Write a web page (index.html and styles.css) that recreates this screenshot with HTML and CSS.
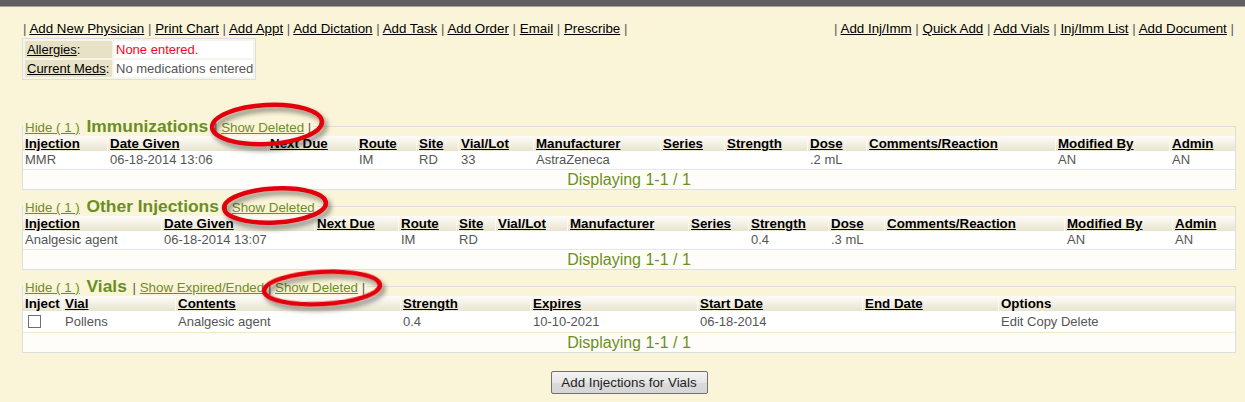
FILE: index.html
```html
<!DOCTYPE html>
<html>
<head>
<meta charset="utf-8">
<title>Chart</title>
<link rel="stylesheet" href="styles.css">
</head>
<body>
<div class="topbar"></div>
<div class="page">
  <div class="toolbar">
    <div class="links"><span class="sep">|</span> <a href="#">Add New Physician</a> <span class="sep">|</span> <a href="#">Print Chart</a> <span class="sep">|</span> <a href="#">Add Appt</a> <span class="sep">|</span> <a href="#">Add Dictation</a> <span class="sep">|</span> <a href="#">Add Task</a> <span class="sep">|</span> <a href="#">Add Order</a> <span class="sep">|</span> <a href="#">Email</a> <span class="sep">|</span> <a href="#">Prescribe</a> <span class="sep">|</span></div>
    <div class="links"><span class="sep">|</span> <a href="#">Add Inj/Imm</a> <span class="sep">|</span> <a href="#">Quick Add</a> <span class="sep">|</span> <a href="#">Add Vials</a> <span class="sep">|</span> <a href="#">Inj/Imm List</a> <span class="sep">|</span> <a href="#">Add Document</a> <span class="sep">|</span></div>
  </div>

  <table class="summary">
    <tr><td class="label"><a href="#">Allergies</a>:</td><td class="value none">None entered.</td></tr>
    <tr><td class="label"><a href="#">Current Meds</a>:</td><td class="value">No medications entered</td></tr>
  </table>

  <section class="panel">
    <div class="panel-head"><span class="head-inner"><a class="green" href="#">Hide ( 1 )</a> <span class="title">Immunizations</span> <span class="sep">|</span> <a class="green" href="#">Show Deleted</a> <span class="sep">|</span></span></div>
    <table class="grid imm">
      <colgroup><col><col><col><col><col><col><col><col><col><col><col><col><col></colgroup>
      <tr><th><a href="#">Injection</a></th><th><a href="#">Date Given</a></th><th><a href="#">Next Due</a></th><th><a href="#">Route</a></th><th><a href="#">Site</a></th><th><a href="#">Vial/Lot</a></th><th><a href="#">Manufacturer</a></th><th><a href="#">Series</a></th><th><a href="#">Strength</a></th><th><a href="#">Dose</a></th><th><a href="#">Comments/Reaction</a></th><th><a href="#">Modified By</a></th><th><a href="#">Admin</a></th></tr>
      <tr class="row"><td>MMR</td><td>06-18-2014 13:06</td><td></td><td>IM</td><td>RD</td><td>33</td><td>AstraZeneca</td><td></td><td></td><td>.2 mL</td><td></td><td>AN</td><td>AN</td></tr>
      <tr><td class="pager" colspan="13">Displaying 1-1 / 1</td></tr>
    </table>
  </section>

  <section class="panel">
    <div class="panel-head"><span class="head-inner"><a class="green" href="#">Hide ( 1 )</a> <span class="title">Other Injections</span> <span class="sep">|</span> <a class="green" href="#">Show Deleted</a></span></div>
    <table class="grid oth">
      <colgroup><col><col><col><col><col><col><col><col><col><col><col><col><col></colgroup>
      <tr><th><a href="#">Injection</a></th><th><a href="#">Date Given</a></th><th><a href="#">Next Due</a></th><th><a href="#">Route</a></th><th><a href="#">Site</a></th><th><a href="#">Vial/Lot</a></th><th><a href="#">Manufacturer</a></th><th><a href="#">Series</a></th><th><a href="#">Strength</a></th><th><a href="#">Dose</a></th><th><a href="#">Comments/Reaction</a></th><th><a href="#">Modified By</a></th><th><a href="#">Admin</a></th></tr>
      <tr class="row"><td>Analgesic agent</td><td>06-18-2014 13:07</td><td></td><td>IM</td><td>RD</td><td></td><td></td><td></td><td>0.4</td><td>.3 mL</td><td></td><td>AN</td><td>AN</td></tr>
      <tr><td class="pager" colspan="13">Displaying 1-1 / 1</td></tr>
    </table>
  </section>

  <section class="panel">
    <div class="panel-head"><span class="head-inner"><a class="green" href="#">Hide ( 1 )</a> <span class="title">Vials</span> <span class="sep">|</span> <a class="green" href="#">Show Expired/Ended</a> <span class="sep">|</span> <a class="green" href="#">Show Deleted</a> <span class="sep">|</span></span></div>
    <table class="grid vials">
      <colgroup><col><col><col><col><col><col><col><col></colgroup>
      <tr><th>Inject</th><th><a href="#">Vial</a></th><th><a href="#">Contents</a></th><th><a href="#">Strength</a></th><th><a href="#">Expires</a></th><th><a href="#">Start Date</a></th><th><a href="#">End Date</a></th><th>Options</th></tr>
      <tr class="row tall"><td><input class="check" type="checkbox"></td><td>Pollens</td><td>Analgesic agent</td><td>0.4</td><td>10-10-2021</td><td>06-18-2014</td><td></td><td>Edit Copy Delete</td></tr>
      <tr><td class="pager" colspan="8">Displaying 1-1 / 1</td></tr>
    </table>
  </section>

  <div class="actions"><button class="btn" type="button">Add Injections for Vials</button></div>
</div>

<svg class="marks" width="1245" height="402" viewBox="0 0 1245 402" aria-hidden="true">
  <defs>
    <filter id="sh" x="-20%" y="-50%" width="150%" height="220%">
      <feDropShadow dx="3" dy="4" stdDeviation="2.5" flood-color="#000" flood-opacity="0.45"/>
    </filter>
  </defs>
  <g fill="none" stroke="#e2000e" stroke-width="4.5" filter="url(#sh)">
    <ellipse cx="267" cy="124.5" rx="55" ry="19.5" transform="rotate(-3 267 124.5)"/>
    <ellipse cx="275" cy="205.5" rx="51" ry="17" transform="rotate(-3 275 205.5)"/>
    <ellipse cx="322" cy="288" rx="58" ry="16" transform="rotate(-3 322 288)"/>
  </g>
</svg>
</body>
</html>
```

FILE: styles.css
```css
* { box-sizing: border-box; }
html, body { margin: 0; padding: 0; }
body {
  background: #faf5d8;
  font-family: "Liberation Sans", Arial, sans-serif;
  font-size: 13px;
  color: #000;
  width: 1245px;
  height: 402px;
  overflow: hidden;
  position: relative;
}
a { color: #000; text-decoration: underline; }
.topbar { height: 7px; background: #5f5f5f; border-bottom: 1px solid #a3a3a3; }
.page { padding: 14px 9px 0 22px; }

.toolbar {
  display: flex;
  justify-content: space-between;
  height: 16px;
  line-height: 16px;
  font-size: 13.33px;
  padding: 0 2px 0 1px;
  white-space: nowrap;
}
.sep { color: #5a5a5a; }

.summary {
  margin-top: 1px;
  border: 1px solid #dcdfe2;
  border-spacing: 2px;
  background: #f7f4e9;
}
.summary td { height: 17px; line-height: 17px; padding: 0 0 0 2px; white-space: nowrap; }
.summary .label { width: 87px; background: #e7e1c5; }
.summary .value { width: 139px; background: #fff; color: #555; }
.summary .none { color: #ff0025; }

.panel { border: 1px solid #dcdfe2; margin-top: 46px; }
.panel + .panel { margin-top: 16px; }
.panel-head {
  margin-top: -10px;
  height: 19px;
  line-height: 19px;
  font-size: 17.5px;
  white-space: nowrap;
}
.head-inner { background: #faf5d8; padding: 0 2px; font-size: 13.33px; }
.head-inner .title { font-size: 17.4px; font-weight: bold; color: #6b8e23; margin: 0 2px 0 3px; }
a.green { color: #6f8c2a; }

.grid { width: 1212px; table-layout: fixed; border-collapse: separate; border-spacing: 0; }
.grid th {
  height: 15px;
  line-height: 15px;
  padding: 0 0 0 2px;
  text-align: left;
  font-size: 13.33px;
  font-weight: bold;
  white-space: nowrap;
  overflow: hidden;
  background: linear-gradient(#fdfcf8, #e9e4cf);
  border-left: 1px solid #fbfaf4;
}
.grid th:first-child { border-left: 0; }
.grid td { padding: 0 0 0 3px; white-space: nowrap; overflow: hidden; color: #555; }
.grid td:first-child { padding-left: 2px; }
.grid .row td { height: 18px; line-height: 18px; background: #fff; }
.grid .tall td { height: 21px; line-height: 21px; }
.grid td.pager {
  height: 20px;
  line-height: 19px;
  padding: 0;
  text-align: center;
  font-size: 16px;
  color: #6b8e23;
  background: #fffdf9;
  border-top: 1px solid #f0eacb;
}
.check {
  appearance: none;
  -webkit-appearance: none;
  display: inline-block;
  width: 13px;
  height: 13px;
  margin: 0 0 0 3px;
  border: 1px solid #707070;
  background: #fff;
  vertical-align: -2px;
}

.imm col:nth-child(1) { width: 84px; }
.imm col:nth-child(2) { width: 160px; }
.imm col:nth-child(3) { width: 89px; }
.imm col:nth-child(4) { width: 60px; }
.imm col:nth-child(5) { width: 42px; }
.imm col:nth-child(6) { width: 75px; }
.imm col:nth-child(7) { width: 127px; }
.imm col:nth-child(8) { width: 64px; }
.imm col:nth-child(9) { width: 83px; }
.imm col:nth-child(10) { width: 59px; }
.imm col:nth-child(11) { width: 189px; }
.imm col:nth-child(12) { width: 114px; }
.imm col:nth-child(13) { width: 66px; }

.oth col:nth-child(1) { width: 138px; }
.oth col:nth-child(2) { width: 153px; }
.oth col:nth-child(3) { width: 84px; }
.oth col:nth-child(4) { width: 58px; }
.oth col:nth-child(5) { width: 39px; }
.oth col:nth-child(6) { width: 72px; }
.oth col:nth-child(7) { width: 121px; }
.oth col:nth-child(8) { width: 60px; }
.oth col:nth-child(9) { width: 80px; }
.oth col:nth-child(10) { width: 56px; }
.oth col:nth-child(11) { width: 180px; }
.oth col:nth-child(12) { width: 108px; }
.oth col:nth-child(13) { width: 63px; }

.vials col:nth-child(1) { width: 39px; }
.vials col:nth-child(2) { width: 113px; }
.vials col:nth-child(3) { width: 225px; }
.vials col:nth-child(4) { width: 130px; }
.vials col:nth-child(5) { width: 167px; }
.vials col:nth-child(6) { width: 165px; }
.vials col:nth-child(7) { width: 136px; }
.vials col:nth-child(8) { width: 237px; }

.actions { display: flex; justify-content: center; margin-top: 18px; }
.btn {
  width: 157px;
  height: 23px;
  padding: 0;
  font-family: "Liberation Sans", Arial, sans-serif;
  font-size: 13.33px;
  color: #1e1e1e;
  background: linear-gradient(#f3f3f3, #e6e6e6 50%, #dadada 51%, #d6d6d6);
  border: 1px solid #707070;
  border-radius: 2px;
}

.marks { position: absolute; left: 0; top: 0; pointer-events: none; }
```
